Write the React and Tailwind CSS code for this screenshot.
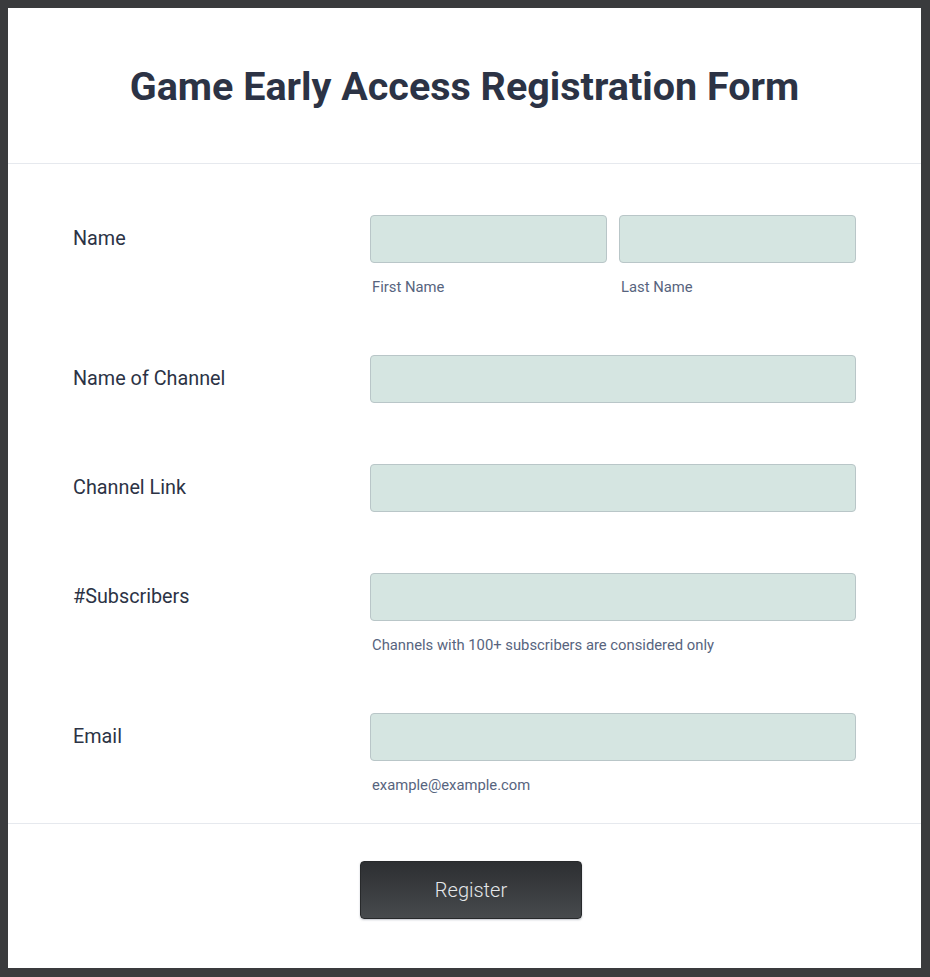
import React from 'react';

const font = { fontFamily: 'Roboto, "Liberation Sans", sans-serif' };

const Input = ({ className = '' }) => (
  <input
    type="text"
    className={`block h-12 w-full rounded-[4px] border border-[#b9c6c8] bg-[#d5e5e1] px-3 text-base text-[#2c3345] outline-none ${className}`}
  />
);

const Sublabel = ({ children }) => (
  <div className="mt-[16px] h-[15px] pl-[2px] text-[14.8px] leading-[17px] text-[#57647e]">{children}</div>
);

const Row = ({ label, children }) => (
  <div className="flex items-start pb-[31px] pt-[30px]">
    <label className="flex h-12 w-[297px] shrink-0 items-center text-[19.8px] text-[#2c3345]">{label}</label>
    <div className="flex-1">{children}</div>
  </div>
);

export default function App() {
  return (
    <div className="min-h-screen bg-[#3a3b3d] pb-[9px] pl-2 pr-[9px] pt-2" style={font}>
      <div className="bg-white">
        {/* Header */}
        <div className="flex h-[156px] items-center justify-center border-b border-[#e6e9ee] pt-[3px]">
          <h1 className="text-[39.5px] font-bold text-[#2c3345]">
            Game Early Access Registration Form
          </h1>
        </div>

        {/* Fields */}
        <div className="px-[65px] pt-[21px]">
          <Row label="Name">
            <div className="flex gap-3">
              <div className="flex-1">
                <Input />
                <Sublabel>First Name</Sublabel>
              </div>
              <div className="flex-1">
                <Input />
                <Sublabel>Last Name</Sublabel>
              </div>
            </div>
          </Row>
          <Row label="Name of Channel">
            <Input />
          </Row>
          <Row label="Channel Link">
            <Input />
          </Row>
          <Row label="#Subscribers">
            <Input />
            <Sublabel>Channels with 100+ subscribers are considered only</Sublabel>
          </Row>
          <Row label="Email">
            <Input />
            <Sublabel>example@example.com</Sublabel>
          </Row>
        </div>

        {/* Submit */}
        <div className="flex justify-center border-t border-[#e6e9ee] pb-[49px] pt-[37px]">
          <button
            type="button"
            className="ml-[13px] h-[58px] w-[222px] rounded-[4px] border border-[#27292b] bg-gradient-to-b from-[#2d2f32] to-[#474a4d] text-[20px] font-light text-[#e4e7ea] shadow-[0_1px_2px_rgba(80,90,110,0.35)]"
          >
            Register
          </button>
        </div>
      </div>
    </div>
  );
}
